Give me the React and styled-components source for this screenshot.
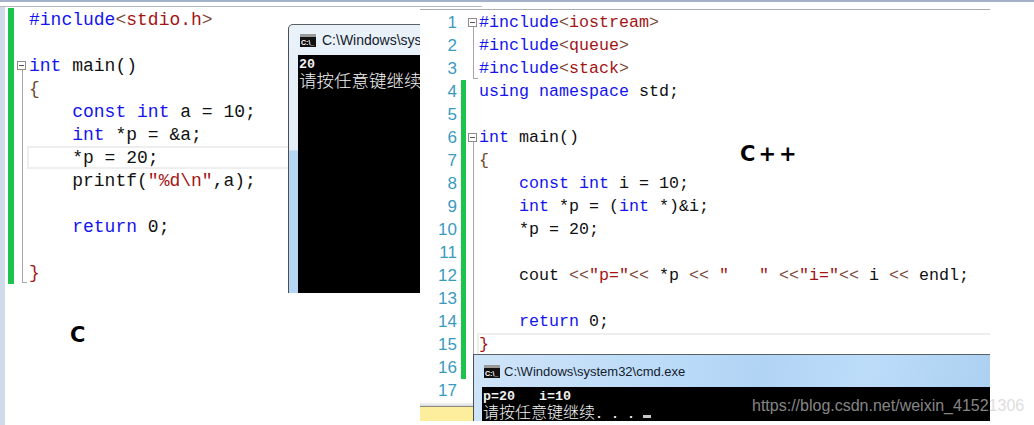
import React from "react";
import styled, { createGlobalStyle, css } from "styled-components";

const Global = createGlobalStyle`
  html, body { margin: 0; padding: 0; background: #fff; overflow: hidden; }
`;

const Canvas = styled.div`
  position: relative;
  width: 1034px;
  height: 425px;
  overflow: hidden;
  background: #fff;
  display: flex;
  flex-direction: column;
`;

const TopBar = styled.div`
  height: 5px;
  flex: none;
  border-top: 2px solid #a3b2c9;
`;

const TopRule = styled.div`
  width: 482px;
  height: 1px;
  margin-top: 4px;
  background: #b4bac2;
`;

const Collage = styled.div`
  flex: 1;
  display: flex;
  align-items: flex-start;
`;

const SideStripe = styled.div`
  width: 5px;
  height: 100%;
  background: #d0dbea;
  margin-right: 3px;
  flex: none;
`;

const LeftShot = styled.div`
  position: relative;
  width: 412px;
  height: 100%;
  flex: none;
  padding-top: 1px;
  box-sizing: border-box;
`;

const RightShot = styled.div`
  position: relative;
  width: 570px;
  height: 412px;
  margin-top: 2px;
  flex: none;
  box-sizing: border-box;
  border-top: 1px solid #a8adb2;
  padding-top: 1px;
  display: flex;
  flex-direction: column;
`;

const Rows = styled.div`
  display: flex;
  flex-direction: column;
  flex: none;
`;

const Row = styled.div`
  display: flex;
  height: 23px;
  align-items: stretch;
`;

const LineNo = styled.div`
  width: 37px;
  margin-right: 4px;
  flex: none;
  text-align: right;
  font: 17px/23px "Liberation Sans", sans-serif;
  color: #3a9bbf;
`;

const Rail = styled.div`
  width: ${(p) => p.$width}px;
  flex: none;
  background: ${(p) => (p.$on ? "#1cc44b" : "transparent")};
`;

const foldLine = css`
  content: "";
  position: absolute;
  left: 50%;
  width: 1px;
  background: #a6a6a6;
`;

const Fold = styled.div`
  position: relative;
  width: ${(p) => p.$width}px;
  flex: none;
  ${(p) =>
    p.$kind === "line" &&
    css`
      &::before {
        ${foldLine};
        top: 0;
        bottom: 0;
      }
    `}
  ${(p) =>
    p.$kind === "end" &&
    css`
      &::before {
        ${foldLine};
        top: 0;
        bottom: 1px;
      }
      &::after {
        content: "";
        position: absolute;
        left: 50%;
        bottom: 1px;
        width: 5px;
        height: 1px;
        background: #a6a6a6;
      }
    `}
  ${(p) =>
    p.$kind === "box" &&
    css`
      &::before {
        ${foldLine};
        top: 16px;
        bottom: 0;
      }
    `}
`;

const FoldBox = styled.span`
  position: absolute;
  left: 50%;
  top: 7px;
  width: 9px;
  height: 9px;
  margin-left: -5px;
  box-sizing: border-box;
  border: 1px solid #8c8c8c;
  background: #fff;
  &::after {
    content: "";
    position: absolute;
    left: 1px;
    right: 1px;
    top: 3px;
    height: 1px;
    background: #555;
  }
`;

const Code = styled.code`
  flex: 1;
  min-width: 0;
  white-space: pre;
  font-family: "Liberation Mono", monospace;
  font-size: ${(p) => p.$size}px;
  line-height: ${(p) => p.$lh}px;
  color: #111;
  box-sizing: border-box;
  ${(p) =>
    p.$current &&
    css`
      line-height: ${p.$lh - 4}px;
      border: 2px solid #eeeeee;
      border-right: none;
      margin-left: -2px;
    `}
`;

const Kw = styled.span`
  color: #1414f0;
`;
const Str = styled.span`
  color: #a31515;
`;
const Op = styled.span`
  color: #7a4a3a;
`;
const Brace = styled.span`
  color: #6e4a2e;
`;

const StatusFade = styled.div`
  height: 4px;
  background: linear-gradient(#ffffff, #d8d8d8);
  flex: none;
`;

const StatusBar = styled.div`
  height: 15px;
  flex: none;
  background: #fdee9d;
  border-top: 1px solid #8a8a80;
  box-sizing: border-box;
`;

const Frame = styled.div`
  position: absolute;
  left: ${(p) => p.$left}px;
  top: ${(p) => p.$top}px;
  width: ${(p) => p.$width}px;
  height: ${(p) => p.$height}px;
  box-sizing: border-box;
  display: flex;
  flex-direction: column;
  overflow: hidden;
  border-left: 1px solid #4a4f55;
  border-top: 1px solid #5b6066;
  padding-left: ${(p) => p.$pad}px;
  background: ${(p) => p.$bg};
`;

const LeftCorner = styled(Frame)`
  border-top-left-radius: 5px;
`;

const TitleBar = styled.div`
  height: ${(p) => p.$height}px;
  flex: none;
  display: flex;
  align-items: center;
  gap: ${(p) => p.$gap}px;
  white-space: nowrap;
  padding-left: 2px;
  font: ${(p) => p.$size}px "Liberation Sans", sans-serif;
  color: #14202c;
`;

const Console = styled.div`
  flex: 1;
  background: #000;
  color: #f2f2f2;
  padding: 4px 0 0 1px;
  white-space: pre;
  overflow: hidden;
`;

const ConsoleMono = styled.div`
  font: bold 13.33px/12px "Liberation Mono", monospace;
`;

const ConsoleCjk = styled.div`
  font-family: "Noto Sans CJK SC", sans-serif;
  font-size: ${(p) => p.$size}px;
  font-weight: 300;
  line-height: 17px;
`;

const ConsoleDots = styled.span`
  font: bold 13.33px/16px "Liberation Mono", monospace;
`;

const Cursor = styled.span`
  display: inline-block;
  width: 8px;
  height: 3px;
  background: #c8c8c8;
`;

const Label = styled.div`
  position: absolute;
  left: ${(p) => p.$left}px;
  top: ${(p) => p.$top}px;
  font: bold 21px/24px "DejaVu Sans", sans-serif;
  color: #000;
  letter-spacing: ${(p) => p.$spacing || 0}px;
  white-space: pre;
`;

const Watermark = styled.div`
  position: absolute;
  left: 752px;
  top: 396px;
  font: 16px/20px "Liberation Sans", sans-serif;
  color: rgba(204, 204, 204, 0.667);
  white-space: nowrap;
`;

const IconSvg = styled.svg`
  flex: none;
`;

const CmdIcon = () => (
  <IconSvg width="16" height="13" viewBox="0 0 16 13">
    <rect width="16" height="13" fill="#111" />
    <rect x="0" y="0" width="16" height="3" fill="#9a9a9a" />
    <text x="1" y="10.5" fontSize="7" fontWeight="700" fill="#fff" fontFamily="Liberation Sans, sans-serif">
      C:\_
    </text>
  </IconSvg>
);

const LEFT_ROWS = [
  { fold: null, code: <><Kw>#include</Kw><Op>&lt;</Op><Str>stdio.h</Str><Op>&gt;</Op></> },
  { fold: null, code: "" },
  { fold: "box", code: <><Kw>int</Kw> main()</> },
  { fold: "line", code: <Brace>{"{"}</Brace> },
  { fold: "line", code: <>{"    "}<Kw>const</Kw> <Kw>int</Kw> a = 10;</> },
  { fold: "line", code: <>{"    "}<Kw>int</Kw> *p = &amp;a;</> },
  { fold: "line", current: true, code: "    *p = 20;" },
  { fold: "line", code: <>{"    "}printf(<Str>"%d\n"</Str>,a);</> },
  { fold: "line", code: "" },
  { fold: "line", code: <>{"    "}<Kw>return</Kw> 0;</> },
  { fold: "line", code: "" },
  { fold: "end", code: <Str>{"}"}</Str> },
];

const RIGHT_ROWS = [
  { fold: "box", code: <><Kw>#include</Kw><Op>&lt;</Op><Str>iostream</Str><Op>&gt;</Op></> },
  { fold: "line", code: <><Kw>#include</Kw><Op>&lt;</Op><Str>queue</Str><Op>&gt;</Op></> },
  { fold: "end", code: <><Kw>#include</Kw><Op>&lt;</Op><Str>stack</Str><Op>&gt;</Op></> },
  { rail: true, code: <><Kw>using</Kw> <Kw>namespace</Kw> std;</> },
  { rail: true, code: "" },
  { rail: true, fold: "box", code: <><Kw>int</Kw> main()</> },
  { rail: true, fold: "line", code: <Brace>{"{"}</Brace> },
  { rail: true, fold: "line", code: <>{"    "}<Kw>const</Kw> <Kw>int</Kw> i = 10;</> },
  { rail: true, fold: "line", code: <>{"    "}<Kw>int</Kw> *p = (<Kw>int</Kw> *)&amp;i;</> },
  { rail: true, fold: "line", code: "    *p = 20;" },
  { rail: true, fold: "line", code: "" },
  { rail: true, fold: "line", code: <>{"    "}cout <Op>&lt;&lt;</Op><Str>"p="</Str><Op>&lt;&lt;</Op> *p <Op>&lt;&lt;</Op> <Str>"   "</Str> <Op>&lt;&lt;</Op><Str>"i="</Str><Op>&lt;&lt;</Op> i <Op>&lt;&lt;</Op> endl;</> },
  { rail: true, fold: "line", code: "" },
  { rail: true, fold: "line", code: <>{"    "}<Kw>return</Kw> 0;</> },
  { rail: true, fold: "end", current: true, code: <Str>{"}"}</Str> },
  { rail: true, code: "" },
  { code: "" },
];

const FoldCell = ({ kind, width }) => (
  <Fold $kind={kind} $width={width}>
    {kind === "box" && <FoldBox />}
  </Fold>
);

export default function App() {
  return (
    <Canvas>
      <Global />
      <TopBar>
        <TopRule />
      </TopBar>
      <Collage>
        <SideStripe />
        <LeftShot>
          <Rows>
            {LEFT_ROWS.map((r, i) => (
              <Row key={i}>
                <Rail $width={6} $on />
                <FoldCell kind={r.fold} width={15} />
                <Code $size={18} $lh={25} $current={r.current}>{r.code}</Code>
              </Row>
            ))}
          </Rows>
          <LeftCorner
            $left={280}
            $top={17}
            $width={132}
            $height={269}
            $pad={9}
            $bg="linear-gradient(#e9f1f9 0, #e4eef8 125px, #b6d5f5 126px, #b6d5f5 100%)"
          >
            <TitleBar $height={30} $gap={6} $size={14}>
              <CmdIcon />
              C:\Windows\system32\cmd.exe
            </TitleBar>
            <Console>
              <ConsoleMono>20</ConsoleMono>
              <ConsoleCjk $size={17.5}>请按任意键继续</ConsoleCjk>
            </Console>
          </LeftCorner>
          <Label $left={62} $top={316}>C</Label>
        </LeftShot>
        <RightShot>
          <Rows>
            {RIGHT_ROWS.map((r, i) => (
              <Row key={i}>
                <LineNo>{i + 1}</LineNo>
                <Rail $width={5} $on={r.rail} />
                <FoldCell kind={r.fold} width={13} />
                <Code $size={16.67} $lh={24} $current={r.current}>{r.code}</Code>
              </Row>
            ))}
          </Rows>
          <StatusFade />
          <StatusBar />
          <Frame
            $left={53}
            $top={344}
            $width={517}
            $height={67}
            $pad={8}
            $bg="linear-gradient(100deg, #cfe4f8 0%, #b9daf8 40%, #b2d4f4 55%, #bcdcfa 75%, #acd0f0 100%)"
          >
            <TitleBar $height={32} $gap={4} $size={13}>
              <CmdIcon />
              C:\Windows\system32\cmd.exe
            </TitleBar>
            <Console>
              <ConsoleMono>p=20   i=10</ConsoleMono>
              <ConsoleCjk $size={16}>
                请按任意键继续<ConsoleDots>. . . </ConsoleDots><Cursor />
              </ConsoleCjk>
            </Console>
          </Frame>
          <Label $left={320} $top={132} $spacing={3}>C++</Label>
        </RightShot>
      </Collage>
      <Watermark>https://blog.csdn.net/weixin_41521306</Watermark>
    </Canvas>
  );
}
